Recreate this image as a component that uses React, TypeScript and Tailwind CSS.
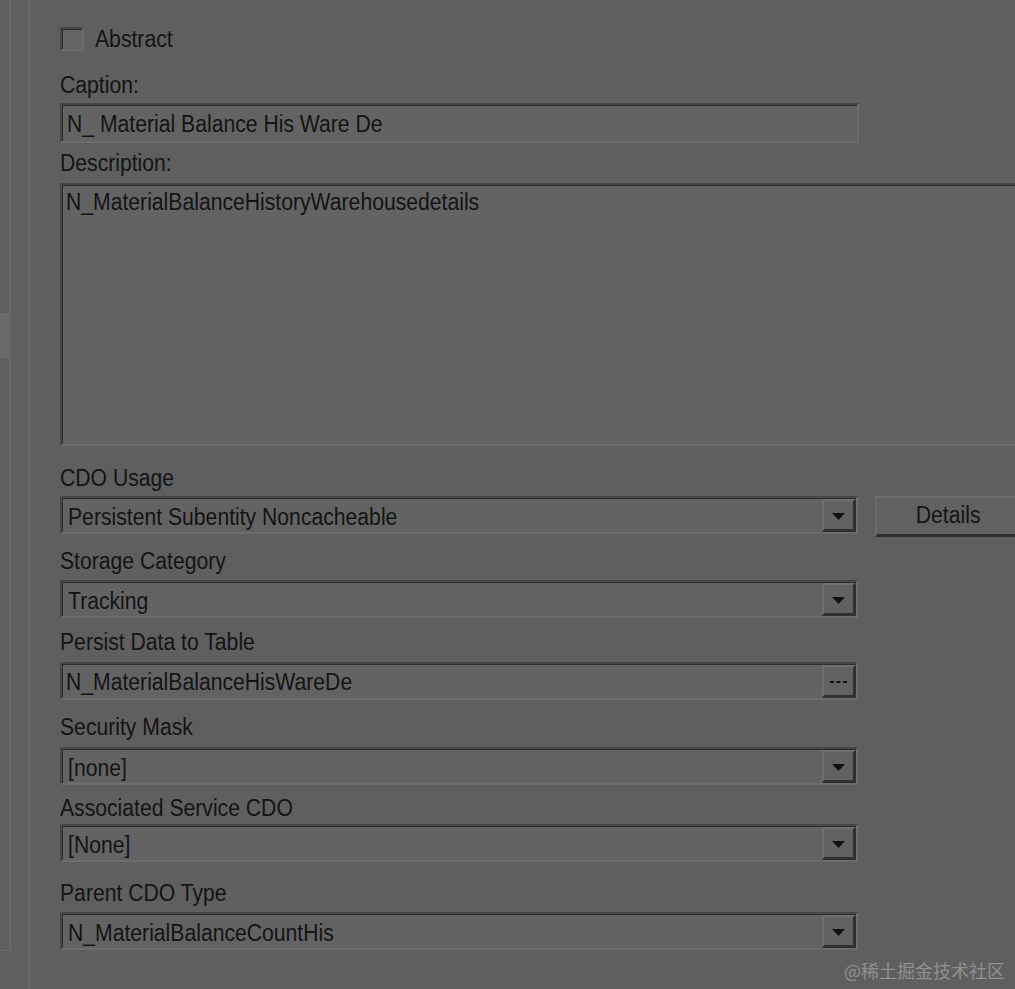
import type { ReactNode } from 'react';

// Win-classic style property panel, dimmed gray

function T({ children, center = false }: { children: ReactNode; center?: boolean }) {
  return (
    <span
      className={`inline-block whitespace-nowrap scale-x-[0.92] ${center ? 'origin-center' : 'origin-left'}`}
    >
      {children}
    </span>
  );
}

function Label({ children, className = '' }: { children: ReactNode; className?: string }) {
  return (
    <div className={`h-[24px] ${className}`}>
      <T>{children}</T>
    </div>
  );
}

function Sunken({ className = '', children }: { className?: string; children?: ReactNode }) {
  return (
    <div
      className={`border-t-2 border-l-2 border-b-2 border-r-2 border-t-[#474747] border-l-[#474747] border-b-[#6d6d6d] border-r-[#6d6d6d] ${className}`}
    >
      <div className="h-full border-t border-l border-t-[#2e2e2e] border-l-[#2e2e2e] bg-[#636363]">
        {children}
      </div>
    </div>
  );
}

function RaisedBtn({ children }: { children: ReactNode }) {
  return (
    <div className="flex h-full w-[34px] shrink-0 items-center justify-center border-t-2 border-l-2 border-b-[3px] border-r-[3px] border-t-[#6f6f6f] border-l-[#6f6f6f] border-b-[#313131] border-r-[#313131] bg-[#626262] pt-[2px]">
      {children}
    </div>
  );
}

function Arrow() {
  return (
    <svg width="13" height="7" viewBox="0 0 13 7">
      <path d="M0 0h13L6.5 7z" fill="#111" />
    </svg>
  );
}

function Dashes() {
  return (
    <svg width="17" height="2" viewBox="0 0 17 2">
      <rect x="0" y="0" width="4" height="2" fill="#111" />
      <rect x="6.5" y="0" width="4" height="2" fill="#111" />
      <rect x="13" y="0" width="4" height="2" fill="#111" />
    </svg>
  );
}

function Select({ value, className = '' }: { value: string; className?: string }) {
  return (
    <Sunken className={`h-[38px] w-[798px] shrink-0 ${className}`}>
      <div className="flex h-full">
        <div className="flex flex-1 items-center pl-[5px] pt-[2px]">
          <T>{value}</T>
        </div>
        <RaisedBtn>
          <Arrow />
        </RaisedBtn>
      </div>
    </Sunken>
  );
}

export default function App() {
  return (
    <div className="relative flex h-[989px] w-[1015px] overflow-hidden bg-[#5f5f5f] font-['Liberation_Sans',Arial,sans-serif] text-[23px] leading-[24px] text-[#141414]">
      {/* left rail */}
      <div className="flex shrink-0">
        <div className="h-[951px] w-[11px] border-r-2 border-b border-r-[#676767] border-b-[#6a6a6a]">
          <div className="mt-[313px] h-[45px] w-[9px] bg-[#6a6a6a]" />
        </div>
        <div className="h-full w-[20px] border-r-[3px] border-r-[#666666]" />
      </div>

      <main className="flex flex-col pl-[29px] pt-[27px]">
        <div className="flex h-[24px] items-center">
          <div className="h-[24px] w-[24px] border-t-2 border-l-2 border-b-2 border-r-2 border-t-[#474747] border-l-[#474747] border-b-[#6d6d6d] border-r-[#6d6d6d]">
            <div className="h-full border-t border-l border-t-[#2e2e2e] border-l-[#2e2e2e] bg-[#646464]" />
          </div>
          <div className="ml-[11px] h-[24px]">
            <T>Abstract</T>
          </div>
        </div>

        <Label className="mt-[22px]">Caption:</Label>
        <Sunken className="mt-[6px] h-[40px] w-[799px]">
          <div className="flex h-full items-center pl-[4px]">
            <T>N_ Material Balance His Ware De</T>
          </div>
        </Sunken>

        <Label className="mt-[8px]">Description:</Label>
        <Sunken className="mt-[8px] h-[263px] w-[960px]">
          <div className="pl-[3px] pt-[4px]">
            <T>N_MaterialBalanceHistoryWarehousedetails</T>
          </div>
        </Sunken>

        <Label className="mt-[20px]">CDO Usage</Label>
        <div className="mt-[6px] flex items-start gap-[17px]">
          <Select value="Persistent Subentity Noncacheable" />
          <div className="flex h-[41px] w-[144px] shrink-0 items-center justify-center border-t-2 border-l-2 border-b-[3px] border-t-[#6c6c6c] border-l-[#6c6c6c] border-b-[#2f2f2f] bg-[#616161] pb-[3px]">
            <T center>Details</T>
          </div>
        </div>

        <Label className="mt-[12px]">Storage Category</Label>
        <Select value="Tracking" className="mt-[7px]" />

        <Label className="mt-[12px]">Persist Data to Table</Label>
        <Sunken className="mt-[8px] h-[38px] w-[798px]">
          <div className="flex h-full">
            <div className="flex flex-1 items-center pl-[3px] pt-[1px]">
              <T>N_MaterialBalanceHisWareDe</T>
            </div>
            <RaisedBtn>
              <Dashes />
            </RaisedBtn>
          </div>
        </Sunken>

        <Label className="mt-[15px]">Security Mask</Label>
        <Select value="[none]" className="mt-[8px]" />

        <Label className="mt-[11px]">Associated Service CDO</Label>
        <Select value="[None]" className="mt-[4px]" />

        <Label className="mt-[19px]">Parent CDO Type</Label>
        <Select value="N_MaterialBalanceCountHis" className="mt-[7px]" />
      </main>

      <div className="absolute bottom-[7px] right-[10px] font-['Noto_Sans_CJK_SC',sans-serif] text-[18px] leading-[24px] text-[#909090]">
        @稀土掘金技术社区
      </div>
    </div>
  );
}
